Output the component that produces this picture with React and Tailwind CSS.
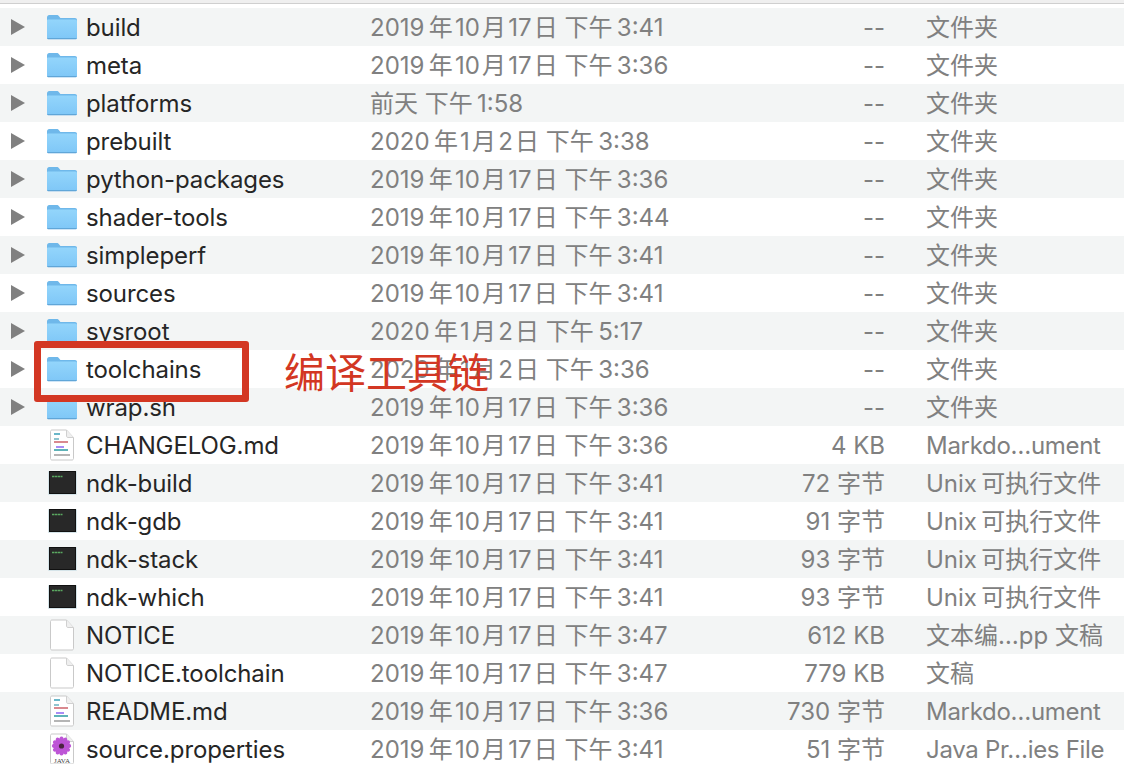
const T = '\u2009';
const H = '\u200a';

const files = [
  { name: 'build', date: '2019年10月17日 下午3:41', size: '--', kind: '文件夹', icon: 'folder' },
  { name: 'meta', date: '2019年10月17日 下午3:36', size: '--', kind: '文件夹', icon: 'folder' },
  { name: 'platforms', date: '前天 下午1:58', size: '--', kind: '文件夹', icon: 'folder' },
  { name: 'prebuilt', date: '2020年1月2日 下午3:38', size: '--', kind: '文件夹', icon: 'folder' },
  { name: 'python-packages', date: '2019年10月17日 下午3:36', size: '--', kind: '文件夹', icon: 'folder' },
  { name: 'shader-tools', date: '2019年10月17日 下午3:44', size: '--', kind: '文件夹', icon: 'folder' },
  { name: 'simpleperf', date: '2019年10月17日 下午3:41', size: '--', kind: '文件夹', icon: 'folder' },
  { name: 'sources', date: '2019年10月17日 下午3:41', size: '--', kind: '文件夹', icon: 'folder' },
  { name: 'sysroot', date: '2020年1月2日 下午5:17', size: '--', kind: '文件夹', icon: 'folder' },
  { name: 'toolchains', date: '2020年1月2日 下午3:36', size: '--', kind: '文件夹', icon: 'folder' },
  { name: 'wrap.sh', date: '2019年10月17日 下午3:36', size: '--', kind: '文件夹', icon: 'folder' },
  { name: 'CHANGELOG.md', date: '2019年10月17日 下午3:36', size: '4 KB', kind: 'Markdo…ument', icon: 'md' },
  { name: 'ndk-build', date: '2019年10月17日 下午3:41', size: '72 字节', kind: 'Unix\u2009可执行文件', icon: 'term' },
  { name: 'ndk-gdb', date: '2019年10月17日 下午3:41', size: '91 字节', kind: 'Unix\u2009可执行文件', icon: 'term' },
  { name: 'ndk-stack', date: '2019年10月17日 下午3:41', size: '93 字节', kind: 'Unix\u2009可执行文件', icon: 'term' },
  { name: 'ndk-which', date: '2019年10月17日 下午3:41', size: '93 字节', kind: 'Unix\u2009可执行文件', icon: 'term' },
  { name: 'NOTICE', date: '2019年10月17日 下午3:47', size: '612 KB', kind: '文本编…pp 文稿', icon: 'doc' },
  { name: 'NOTICE.toolchain', date: '2019年10月17日 下午3:47', size: '779 KB', kind: '文稿', icon: 'doc' },
  { name: 'README.md', date: '2019年10月17日 下午3:36', size: '730 字节', kind: 'Markdo…ument', icon: 'md' },
  { name: 'source.properties', date: '2019年10月17日 下午3:41', size: '51 字节', kind: 'Java Pr…ies File', icon: 'java' },
];

// Finder leaves a small gap between digits and CJK, a bit wider after the year and before the time
function spacedDate(s) {
  return s
    .replace(/(\d{4})年/, '$1' + T + '年')
    .replace(/午(\d)/, '午' + T + '$1')
    .replace(/(\d)([月日])/g, '$1' + H + '$2')
    .replace(/([年月])(\d)/g, '$1' + H + '$2');
}

function SvgFolder() {
  return (
    <svg width="32" height="26" viewBox="0 0 32 26" className="block">
      <defs>
        <linearGradient id="fold" x1="0" y1="0" x2="0" y2="1">
          <stop offset="0" stopColor="#93d5fb" />
          <stop offset="1" stopColor="#7fc7f7" />
        </linearGradient>
      </defs>
      <path d="M1 3.5C1 2 2 1 3.2 1h7.600c1 0 1.600.4 2.200 1.200L14.400 4H29c1.200 0 2 .9 2 2v17.400c0 1.100-.8 1.800-2 1.800H3c-1.200 0-2-.7-2-1.800z" fill="#6fb8ea" />
      <path d="M1 6.400C1 5.800 1.600 5.600 2.200 5.600H29c1.200 0 2 .7 2 1.800v15.800c0 1-.8 1.600-2 1.600H3c-1.200 0-2-.6-2-1.600z" fill="url(#fold)" />
      <path d="M1.400 24.600h29.200" stroke="#5da3d6" strokeWidth="1" />
    </svg>
  );
}

function SvgSheet({ children }) {
  return (
    <svg width="26" height="32" viewBox="0 0 26 32" className="block">
      <path d="M1.500 2.500c0-.8.600-1.500 1.500-1.500h14.500l7 7.500v21c0 .9-.6 1.500-1.500 1.500H3c-.9 0-1.500-.6-1.500-1.500z" fill="#fff" stroke="#c9c9c9" />
      <path d="M17.500 1v6c0 .9.600 1.500 1.500 1.500h5.500" fill="#efefef" stroke="#d0d0d0" />
      {children}
    </svg>
  );
}

function SvgMd() {
  return (
    <SvgSheet>
      <rect x="5" y="4" width="6" height="2" fill="#6ab7c9" />
      <rect x="5" y="9" width="5" height="2" fill="#8fc4cf" />
      <rect x="5" y="12" width="14" height="2" fill="#d9898f" />
      <rect x="7" y="17" width="8" height="2" fill="#a98cf5" />
      <rect x="5" y="20" width="14" height="2" fill="#5fb3b8" />
      <rect x="5" y="25" width="16" height="2" fill="#b5b5b5" />
    </SvgSheet>
  );
}

function SvgTerm() {
  return (
    <svg width="29" height="24" viewBox="0 0 29 24" className="mb-[1px] block">
      <rect x="0" y="0" width="29" height="24" rx="1" fill="#d5e4e9" />
      <rect x="1.500" y="0.500" width="26" height="22" fill="#282828" stroke="#111" />
      <path d="M4 5.500h2.500M7 5.500h2.500M10 5.500h2M12.500 5.500h2" stroke="#5aa860" strokeWidth="1.300" />
    </svg>
  );
}

function SvgJava() {
  const petals = [0, 30, 60, 90, 120, 150, 180, 210, 240, 270, 300, 330];
  return (
    <SvgSheet>
      {petals.map(a => (
        <ellipse key={a} cx="12.500" cy="8" rx="2.400" ry="4.600" fill="#bd55d6" transform={`rotate(${a} 12.500 13)`} />
      ))}
      <circle cx="12.500" cy="13" r="2.600" fill="#4a2340" />
      <text x="13" y="29.800" textAnchor="middle" fontSize="7" fontFamily="Liberation Serif, serif" fill="#444">JAVA</text>
    </SvgSheet>
  );
}

function FileIcon({ type }) {
  if (type === 'folder') return <SvgFolder />;
  if (type === 'md') return <SvgMd />;
  if (type === 'term') return <SvgTerm />;
  if (type === 'java') return <SvgJava />;
  return <SvgSheet />;
}

function Row({ file, index }) {
  const latinKind = file.icon === 'md' || file.icon === 'java';
  return (
    <div className={(index % 2 === 0 ? 'bg-[#f3f5f5] ' : 'bg-white ') + 'flex h-[38px] items-center'}>
      <div className="flex w-[46px] shrink-0 justify-start pl-[11px]">
        {file.icon === 'folder' && <div className="h-0 w-0 border-y-[8px] border-l-[14px] border-y-transparent border-l-[#808080]" />}
      </div>
      <div className="flex w-[32px] shrink-0 justify-center"><FileIcon type={file.icon} /></div>
      <div className="w-[292px] shrink-0 truncate pl-[8px] pt-[2px] tracking-[-0.1px] text-[#262626]">{file.name}</div>
      <div className="w-[401px] shrink-0 whitespace-nowrap pt-[2px] text-[#808080]">{spacedDate(file.date)}</div>
      <div className="w-[114px] shrink-0 whitespace-nowrap pt-[2px] text-right text-[#808080]">{file.size}</div>
      <div className={(latinKind ? 'tracking-[-0.3px] ' : '') + 'ml-[41px] whitespace-nowrap pt-[2px] text-[#808080]'}>{file.kind}</div>
    </div>
  );
}

export default function App() {
  return (
    <div className="relative h-[764px] w-[1124px] overflow-hidden bg-white font-['Inter','Noto_Sans_CJK_SC',sans-serif] text-[24px]">
      <div className="h-[3px] bg-[#efefef]" />
      <div className="h-[1px] bg-[#cfcfcf]" />
      <div className="h-[4px] bg-white" />
      {files.map((f, i) => <Row key={f.name} file={f} index={i} />)}
      <div className="absolute left-[34px] top-[341px] h-[61px] w-[215px] rounded-[3px] border-[7px] border-[#d33723]" />
      <div className="absolute left-[284px] top-[343px] whitespace-nowrap text-[41px] leading-[60px] text-[#d33723]">编译工具链</div>
    </div>
  );
}
